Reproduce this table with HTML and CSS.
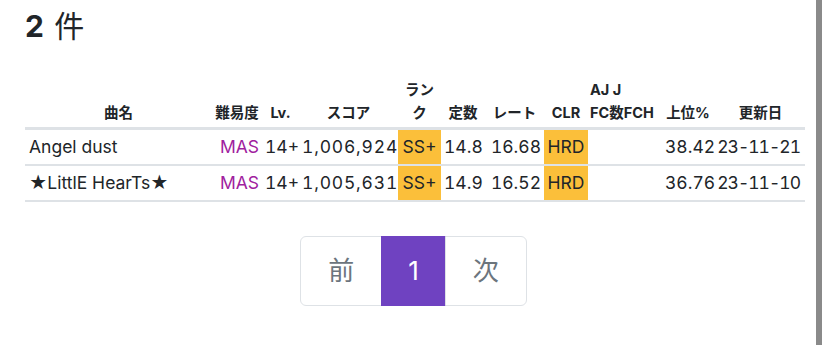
FILE: index.html
```html
<!DOCTYPE html>
<html lang="ja">
<head>
<meta charset="utf-8">
<link rel="stylesheet" href="styles.css">
</head>
<body>
<div class="frame">
  <main class="main">
    <h2 class="count"><b>2</b> 件</h2>
    <table class="scores">
      <colgroup>
        <col class="c-name"><col class="c-diff"><col class="c-lv"><col class="c-score"><col class="c-rank"><col class="c-const"><col class="c-rate"><col class="c-clr"><col class="c-aj"><col class="c-j"><col class="c-top"><col class="c-date">
      </colgroup>
      <thead>
        <tr>
          <th class="center">曲名</th>
          <th class="center">難易度</th>
          <th class="center">Lv.</th>
          <th class="center">スコア</th>
          <th class="center">ラン<br>ク</th>
          <th class="center">定数</th>
          <th class="center">レート</th>
          <th class="center">CLR</th>
          <th class="left aj" colspan="2">AJ J<br>FC数FCH</th>
          <th class="center">上位%</th>
          <th class="center date-h">更新日</th>
        </tr>
      </thead>
      <tbody>
        <tr>
          <td class="left">Angel dust</td>
          <td class="right mas">MAS</td>
          <td class="right num">14+</td>
          <td class="right num score">1,006,924</td>
          <td class="center hl">SS+</td>
          <td class="right num">14.8</td>
          <td class="right num">16.68</td>
          <td class="center hl">HRD</td>
          <td></td>
          <td></td>
          <td class="right num">38.42</td>
          <td class="right num date">23-11-21</td>
        </tr>
        <tr>
          <td class="left">★LittlE HearTs★</td>
          <td class="right mas">MAS</td>
          <td class="right num">14+</td>
          <td class="right num score">1,005,631</td>
          <td class="center hl">SS+</td>
          <td class="right num">14.9</td>
          <td class="right num">16.52</td>
          <td class="center hl">HRD</td>
          <td></td>
          <td></td>
          <td class="right num">36.76</td>
          <td class="right num date">23-11-10</td>
        </tr>
      </tbody>
    </table>
    <nav class="pager">
      <a class="page">前</a>
      <a class="page active">1</a>
      <a class="page">次</a>
    </nav>
  </main>
  <div class="edge"></div>
  <div class="outside"></div>
</div>
</body>
</html>
```
FILE: styles.css
```css
html, body {
  margin: 0;
  padding: 0;
  background: #fff;
}
body {
  font-family: Inter, "Noto Sans CJK JP", sans-serif;
  color: #212529;
}
.frame {
  display: flex;
  height: 345px;
  overflow: hidden;
}
.main {
  width: 816px;
  flex: none;
  padding-left: 25px;
  box-sizing: border-box;
}
.edge {
  width: 6px;
  flex: none;
  background: #8a8a8a;
}
.outside {
  flex: 1;
  background: #fff;
}
.count {
  margin: 6px 0 0;
  font-size: 30px;
  font-weight: 400;
  line-height: 40px;
}
.count b {
  font-weight: 700;
  margin-right: 2px;
}
.scores {
  margin-top: 32px;
  width: 780px;
  table-layout: fixed;
  border-collapse: collapse;
  font-size: 17.5px;
}
.c-name { width: 187px; }
.c-diff { width: 50px; }
.c-lv { width: 37px; }
.c-score { width: 99px; }
.c-rank { width: 43px; }
.c-const { width: 44px; }
.c-rate { width: 59px; }
.c-clr { width: 44px; }
.c-aj { width: 40px; }
.c-j { width: 34px; }
.c-top { width: 52px; }
.c-date { width: 91px; }

.scores th {
  font-size: 14.5px;
  font-weight: 700;
  line-height: 23px;
  vertical-align: bottom;
  padding: 0 2px 3px;
  border-bottom: 3px solid #dee2e6;
  white-space: nowrap;
}
.scores td {
  height: 34px;
  padding: 0 3px;
  line-height: 24px;
  border-bottom: 2px solid #dee2e6;
  white-space: nowrap;
}
.num {
  font-variant-numeric: tabular-nums;
}
.score {
  letter-spacing: 0.8px;
}
.date {
  letter-spacing: -1px;
}
.left { text-align: left; }
.right { text-align: right; }
.center { text-align: center; }
.scores td.left { padding-left: 4px; }
.scores td.right { padding-right: 3px; }
.scores td.date { padding-right: 5px; }
.scores th.aj { padding-left: 2px; }
.scores th.date-h { padding-left: 4px; }
.mas { color: #a0219e; }
.hl {
  background: #fbbf3a;
}
.scores td.hl { padding: 0 1px; }

.pager {
  display: flex;
  justify-content: center;
  margin: 34px 0 0;
  width: 780px;
  padding-right: 3px;
  box-sizing: border-box;
}
.page {
  display: block;
  height: 68px;
  line-height: 68px;
  padding: 0 27px;
  font-size: 26px;
  color: #6c757d;
  border: 1px solid #dee2e6;
  background: #fff;
}
.page + .page {
  margin-left: -1px;
}
.page:first-child {
  border-radius: 6px 0 0 6px;
}
.page:last-child {
  border-radius: 0 6px 6px 0;
}
.page.active {
  background: #6f42c1;
  border-color: #6f42c1;
  color: #fff;
  padding: 0 26px;
}
```
